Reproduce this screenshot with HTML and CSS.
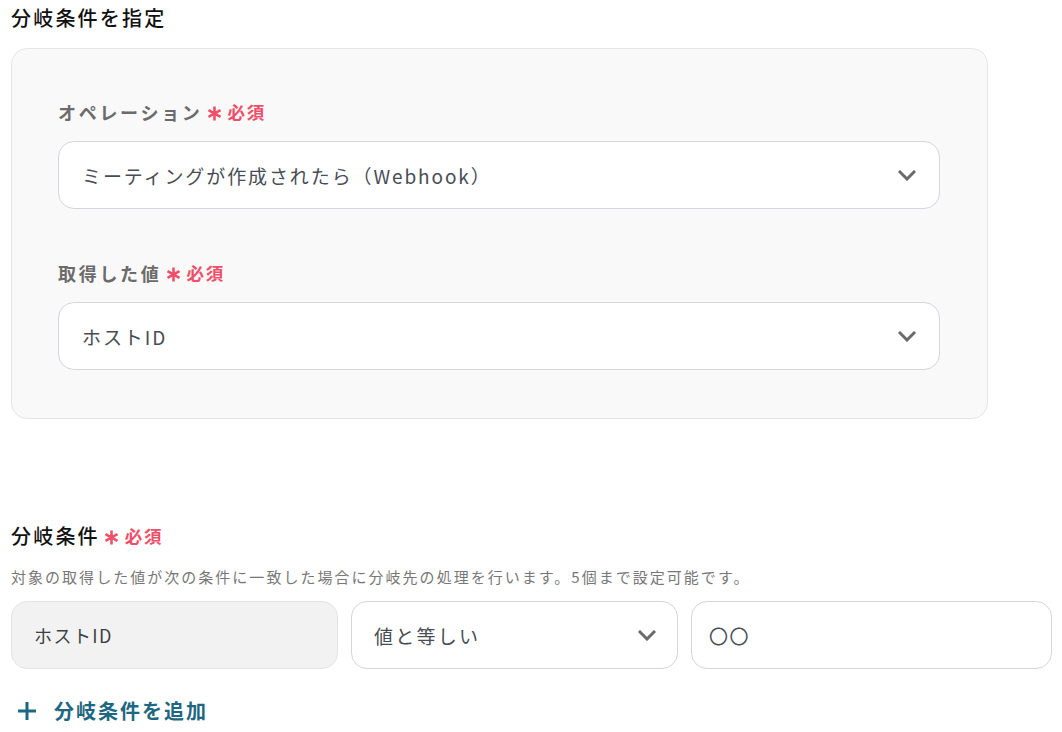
FILE: index.html
```html
<!DOCTYPE html>
<html lang="ja">
<head>
<meta charset="utf-8">
<title>分岐条件を指定</title>
<link rel="stylesheet" href="styles.css">
</head>
<body>
<div class="page">
  <h2 class="section-title">分岐条件を指定</h2>
  <div class="panel">
    <div class="field">
      <div class="label">オペレーション<span class="req"><svg class="ast" width="15" height="15" viewBox="0 0 14 14"><path d="M7 0.5 V13.5 M1.4 3.75 L12.6 10.25 M1.4 10.25 L12.6 3.75" stroke="#f04f6a" stroke-width="2.4" fill="none"/></svg>必須</span></div>
      <div class="select">
        <span class="select-text">ミーティングが作成されたら（Webhook）</span>
        <svg class="chev" width="18" height="11" viewBox="0 0 18 11"><polyline points="2,2 9,9 16,2" fill="none" stroke="#6a6a6a" stroke-width="3" stroke-linecap="square"/></svg>
      </div>
    </div>
    <div class="field">
      <div class="label">取得した値<span class="req"><svg class="ast" width="15" height="15" viewBox="0 0 14 14"><path d="M7 0.5 V13.5 M1.4 3.75 L12.6 10.25 M1.4 10.25 L12.6 3.75" stroke="#f04f6a" stroke-width="2.4" fill="none"/></svg>必須</span></div>
      <div class="select">
        <span class="select-text">ホストID</span>
        <svg class="chev" width="18" height="11" viewBox="0 0 18 11"><polyline points="2,2 9,9 16,2" fill="none" stroke="#6a6a6a" stroke-width="3" stroke-linecap="square"/></svg>
      </div>
    </div>
  </div>

  <h2 class="section-title second">分岐条件<span class="req"><svg class="ast" width="15" height="15" viewBox="0 0 14 14"><path d="M7 0.5 V13.5 M1.4 3.75 L12.6 10.25 M1.4 10.25 L12.6 3.75" stroke="#f04f6a" stroke-width="2.4" fill="none"/></svg>必須</span></h2>
  <p class="desc">対象の取得した値が次の条件に一致した場合に分岐先の処理を行います。5個まで設定可能です。</p>
  <div class="cond-row">
    <div class="box box-fixed">ホストID</div>
    <div class="box box-select">
      <span>値と等しい</span>
      <svg class="chev" width="18" height="11" viewBox="0 0 18 11"><polyline points="2,2 9,9 16,2" fill="none" stroke="#6a6a6a" stroke-width="3" stroke-linecap="square"/></svg>
    </div>
    <div class="box box-input">〇〇</div>
  </div>
  <div class="add">
    <svg class="plus" width="20" height="20" viewBox="0 0 20 20"><path d="M10 1 V19 M1 10 H19" stroke="#1d6880" stroke-width="3" fill="none"/></svg>
    <span>分岐条件を追加</span>
  </div>
</div>
</body>
</html>
```

FILE: styles.css
```css
* { box-sizing: border-box; }
html, body { margin: 0; padding: 0; background: #ffffff; }
body {
  font-family: "Noto Sans CJK JP", "Noto Sans", "Liberation Sans", sans-serif;
  color: #1a1a1a;
}
.page {
  padding: 4px 10px 0 11px;
}
.section-title {
  margin: 0;
  font-size: 20px;
  font-weight: 500;
  line-height: 28px;
  letter-spacing: 0.11em;
  color: #111;
  display: flex;
  align-items: center;
}
.section-title.second {
  margin-top: 103px;
}
.panel {
  margin-top: 16px;
  width: 977px;
  background: #f9f9f9;
  border: 1px solid #e6e6e6;
  border-radius: 16px;
  padding: 49px 47px 48px 46px;
}
.field + .field {
  margin-top: 50px;
}
.label {
  font-size: 18px;
  font-weight: 700;
  line-height: 28px;
  color: #6b6b6b;
  letter-spacing: 0.15em;
  display: flex;
  align-items: center;
  margin-bottom: 15px;
}
.req {
  display: inline-flex;
  align-items: center;
  color: #f04f6a;
  font-size: 17.5px;
  font-weight: 700;
  letter-spacing: 0.1em;
  margin-left: 4px;
}
.ast {
  display: block;
  margin-right: 6px;
  position: relative;
  top: 1px;
}
.select {
  height: 68px;
  background: #fff;
  border: 1px solid #d3d6dd;
  border-radius: 16px;
  display: flex;
  align-items: center;
  justify-content: space-between;
  padding: 0 23px 0 23px;
}
.select-text {
  font-size: 19px;
  color: #484d55;
  letter-spacing: 0.1em;
}
.chev { display: block; }
.desc {
  margin: 17px 0 0 0;
  font-size: 15px;
  line-height: 20px;
  color: #777;
  letter-spacing: 0.135em;
}
.cond-row {
  margin-top: 14px;
  display: flex;
  gap: 13px;
}
.box {
  height: 68px;
  border-radius: 16px;
  display: flex;
  align-items: center;
  padding: 0 22px;
  font-size: 18px;
  letter-spacing: 0.08em;
  color: #3c3f44;
}
.box-fixed {
  width: 327px;
  background: #f2f2f2;
  border: 1px solid #e4e4e4;
}
.box-select {
  width: 327px;
  background: #fff;
  border: 1px solid #d3d6dd;
  justify-content: space-between;
  padding-right: 21px;
  font-size: 19px;
  letter-spacing: 0.12em;
  color: #484d55;
}
.box-input {
  flex: 1;
  background: #fff;
  border: 1px solid #d3d6dd;
  padding-left: 17px;
  color: #484d55;
  font-size: 19px;
}
.add {
  margin-top: 28px;
  display: flex;
  align-items: center;
  gap: 17px;
  padding-left: 6px;
  color: #1d6880;
  font-size: 20px;
  font-weight: 700;
  line-height: 28px;
  letter-spacing: 0.1em;
}
.plus { display: block; }
```
